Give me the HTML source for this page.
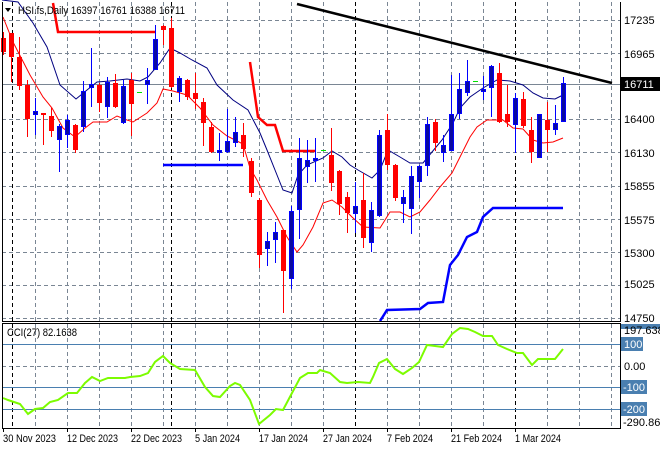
<!DOCTYPE html>
<html><head><meta charset="utf-8"><style>
html,body{margin:0;padding:0;background:#fff;}
svg{display:block;font-family:"Liberation Sans",sans-serif;font-size:11px;}
</style></head><body>
<svg width="660" height="450" viewBox="0 0 660 450" xmlns="http://www.w3.org/2000/svg">
<rect width="660" height="450" fill="#fff"/>
<g stroke="#7a8694" stroke-width="1" stroke-dasharray="4,3" fill="none">
<path d="M2 20.5H620M2 53.5H620M2 119.5H620M2 152.5H620M2 186.5H620M2 219.5H620M2 252.5H620M2 285.5H620M2 318.5H620"/>
<path d="M35.5 2V321M67.5 2V321M99.5 2V321M131.5 2V321M163.5 2V321M195.5 2V321M227.5 2V321M259.5 2V321M291.5 2V321M323.5 2V321M387.5 2V321M419.5 2V321M451.5 2V321M483.5 2V321M547.5 2V321M579.5 2V321M611.5 2V321"/>
<path d="M35.5 324V428M67.5 324V428M99.5 324V428M131.5 324V428M163.5 324V428M195.5 324V428M227.5 324V428M259.5 324V428M291.5 324V428M323.5 324V428M387.5 324V428M419.5 324V428M451.5 324V428M483.5 324V428M547.5 324V428M579.5 324V428M611.5 324V428"/>
<path d="M2 366.5H620"/>
</g>
<g stroke="#000" stroke-width="1" stroke-dasharray="4,3">
<path d="M12.5 2V321M171.5 2V321M355.5 2V321M515.5 2V321M12.5 324V428M171.5 324V428M355.5 324V428M515.5 324V428"/>
</g>
<path d="M2 84.5H620" stroke="#7a8694" stroke-width="1"/>
<polyline points="53,3 58,32 155,32" fill="none" stroke="#f00" stroke-width="2.5"/>
<polyline points="250,62 258,117 267,125 275,125 283,151 315,151" fill="none" stroke="#f00" stroke-width="2.5"/>
<path d="M163 165H243" stroke="#0000ff" stroke-width="2.5"/>
<polyline points="380,321 382,318 387,310 420,309 428,303 443,302 450,265 458,255 467,237 477,232 483,217 493,208 563,208" fill="none" stroke="#0000ff" stroke-width="2.5"/>
<polyline points="2,0 18,2 33,23 47,47 60,85 76,99 87,90 97,82 110,81 127,79 140,81 148,77 160,63 170,48 180,53 192,60 207,68 217,85 233,100 248,110 260,133 267,150 275,170 283,190 292,193 298,175 307,165 323,158 332,151 342,157 350,165 358,170 372,178 380,170 388,150 400,157 410,163 423,163 432,152 442,140 453,123 460,108 470,97 483,88 497,80 510,81 523,85 533,93 543,98 555,99 563,95" fill="none" stroke="#000080" stroke-width="1"/>
<polyline points="3,17 13,42 30,75 43,97 52,108 63,128 75,137 85,128 93,122 107,122 117,116 127,120 133,122 147,113 157,103 163,89 173,91 187,95 200,108 213,125 227,136 243,144 250,168 257,180 267,200 277,217 287,237 297,252 303,245 313,227 323,203 332,200 342,207 352,217 363,227 380,228 390,212 400,212 410,217 420,212 430,200 440,187 452,173 460,157 470,137 477,127 487,120 503,120 513,128 523,129 533,140 543,143 553,142 563,138" fill="none" stroke="#f00" stroke-width="1"/>
<path d="M297 4L612 83" stroke="#000" stroke-width="2.5"/>
<g stroke="#f00" fill="#f00" stroke-width="1">
<path d="M3.5 32V55M11.5 33V82M19.5 37V90M27.5 80V137M43.5 113V145M51.5 108V137M75.5 124V153M99.5 83V112M115.5 74V108M131.5 73V136M163.5 25V45M171.5 18V88M187.5 79V100M195.5 73V109M203.5 98V146M211.5 122V153M243.5 123V157M251.5 158V197M259.5 198V268M283.5 230V313M331.5 128V191M339.5 170V215M347.5 192V233M363.5 173V248M387.5 114V170M395.5 164V201M435.5 119V151M499.5 63V123M507.5 85V127M523.5 92V128M531.5 117V163M547.5 102V152"/>
<g stroke="none">
<rect x="1" y="38" width="5" height="14"/><rect x="9" y="33" width="5" height="24"/><rect x="17" y="57" width="5" height="29"/><rect x="25" y="85" width="5" height="34"/><rect x="41" y="113" width="5" height="2"/><rect x="49" y="116" width="5" height="15"/><rect x="73" y="125" width="5" height="25"/><rect x="97" y="85" width="5" height="18"/><rect x="113" y="83" width="5" height="24"/><rect x="129" y="80" width="5" height="24"/><rect x="161" y="26" width="5" height="4"/><rect x="169" y="28" width="5" height="59"/><rect x="185" y="80" width="5" height="17"/><rect x="193" y="93" width="5" height="6"/><rect x="201" y="102" width="5" height="21"/><rect x="209" y="127" width="5" height="25"/><rect x="241" y="135" width="5" height="14"/><rect x="249" y="161" width="5" height="32"/><rect x="257" y="200" width="5" height="55"/><rect x="281" y="230" width="5" height="41"/><rect x="329" y="155" width="5" height="28"/><rect x="337" y="171" width="5" height="33"/><rect x="345" y="197" width="5" height="16"/><rect x="361" y="200" width="5" height="38"/><rect x="385" y="130" width="5" height="35"/><rect x="393" y="165" width="5" height="33"/><rect x="433" y="122" width="5" height="21"/><rect x="497" y="73" width="5" height="49"/><rect x="505" y="114" width="5" height="8"/><rect x="521" y="99" width="5" height="27"/><rect x="529" y="130" width="5" height="22"/><rect x="545" y="120" width="5" height="10"/>
</g></g>
<g stroke="#0000ff" stroke-width="1">
<path d="M35.5 98V135M59.5 124V172M67.5 115V148M83.5 81V132M91.5 48V107M107.5 77V118M123.5 80V124M147.5 68V104M155.5 25V70M179.5 76V102M219.5 133V161M227.5 109V153M235.5 117V147M267.5 232V266M275.5 222V263M291.5 206V289M299.5 138V239M307.5 140V183M315.5 138V182M355.5 182V233M371.5 202V252M379.5 130V217M403.5 190V223M411.5 166V234M419.5 165V198M427.5 117V176M443.5 135V162M451.5 75V151M459.5 73V119M467.5 60V96M483.5 76V100M491.5 65V117M515.5 93V153M539.5 114V157M555.5 105V135M563.5 77V121"/>
</g>
<g fill="#0a0aa0" stroke="#0000ff" stroke-width="1">
<rect x="33.5" y="111.5" width="4" height="3"/><rect x="57.5" y="126.5" width="4" height="13"/><rect x="65.5" y="120.5" width="4" height="14"/><rect x="81.5" y="91.5" width="4" height="35"/><rect x="89.5" y="84.5" width="4" height="3"/><rect x="105.5" y="82.5" width="4" height="24"/><rect x="121.5" y="86.5" width="4" height="36"/><rect x="145.5" y="80.5" width="4" height="4"/><rect x="153.5" y="39.5" width="4" height="30"/><rect x="177.5" y="78.5" width="4" height="13"/><rect x="217.5" y="150.5" width="4" height="2"/><rect x="225.5" y="141.5" width="4" height="10"/><rect x="233.5" y="132.5" width="4" height="10"/><rect x="265.5" y="241.5" width="4" height="7"/><rect x="273.5" y="232.5" width="4" height="7"/><rect x="289.5" y="211.5" width="4" height="67"/><rect x="297.5" y="158.5" width="4" height="51"/><rect x="305.5" y="160.5" width="4" height="6"/><rect x="313.5" y="158.5" width="4" height="2"/><rect x="353.5" y="206.5" width="4" height="7"/><rect x="369.5" y="210.5" width="4" height="32"/><rect x="377.5" y="135.5" width="4" height="80"/><rect x="401.5" y="197.5" width="4" height="6"/><rect x="409.5" y="176.5" width="4" height="32"/><rect x="417.5" y="166.5" width="4" height="15"/><rect x="425.5" y="124.5" width="4" height="41"/><rect x="441.5" y="145.5" width="4" height="7"/><rect x="449.5" y="114.5" width="4" height="36"/><rect x="457.5" y="89.5" width="4" height="24"/><rect x="465.5" y="81.5" width="4" height="11"/><rect x="481.5" y="89.5" width="4" height="2"/><rect x="489.5" y="66.5" width="4" height="21"/><rect x="513.5" y="98.5" width="4" height="26"/><rect x="537.5" y="114.5" width="4" height="43"/><rect x="553.5" y="123.5" width="4" height="6"/><rect x="561.5" y="83.5" width="4" height="38"/>
</g>
<path d="M137 92.5H142M321 150.5H326M473 81.5H478" stroke="#00e000" stroke-width="1"/>
<path d="M2 344.5H620M2 387.5H620M2 409.5H620" stroke="#4a7fb0" stroke-width="1"/>
<polyline points="3,398 8,400 20,404 28,414 35,409 43,408 50,402 58,400 68,393 77,393 85,383 92,377 100,381 108,378 125,378 130,377 140,376 148,373 155,362 163,356 170,363 180,369 195,370 205,387 213,396 220,397 230,386 235,383 240,385 250,400 259,424 270,415 276,409 283,410 292,393 300,378 308,373 317,373 320,370 330,373 340,382 347,383 358,382 370,383 373,377 379,363 387,359 395,369 403,374 412,368 419,362 427,345 435,346 443,347 452,334 460,328 468,329 475,332 483,336 492,336 498,345 507,349 517,353 523,353 532,365 538,359 555,359 563,349" fill="none" stroke="#7cfc00" stroke-width="2"/>
<g fill="none" stroke="#000" stroke-width="1">
<path d="M2.5 2V321.5H620.5V2"/>
<path d="M2.5 323.5H620.5V428.5H2.5Z"/>
</g>
<path d="M5 8L11 8L8 12Z" fill="#000"/>
<text x="18" y="14" fill="#000" textLength="167" lengthAdjust="spacingAndGlyphs">HSI.fs,Daily  16397 16761 16388 16711</text>
<text x="7" y="336" fill="#000" textLength="70" lengthAdjust="spacingAndGlyphs">CCI(27) 82.1638</text>
<g fill="#000">
<text x="624" y="24">17235</text>
<text x="624" y="58">16965</text>
<text x="624" y="123">16400</text>
<text x="624" y="157">16130</text>
<text x="624" y="190">15855</text>
<text x="624" y="224">15575</text>
<text x="624" y="257">15300</text>
<text x="624" y="288">15025</text>
<text x="624" y="322">14750</text>
</g>
<rect x="621" y="77" width="39" height="14" fill="#000"/>
<text x="624" y="88" fill="#fff">16711</text>
<rect x="621" y="324" width="39" height="5" fill="#4a7fb0"/>
<text x="624" y="334" fill="#000">197.6389</text>
<rect x="621" y="337" width="22" height="14" fill="#4a7fb0"/>
<text x="624" y="348" fill="#fff">100</text>
<text x="624" y="370" fill="#000">0.00</text>
<rect x="621" y="380" width="26" height="14" fill="#4a7fb0"/>
<text x="623" y="391" fill="#fff">-100</text>
<rect x="621" y="402" width="26" height="14" fill="#4a7fb0"/>
<text x="623" y="413" fill="#fff">-200</text>
<text x="623" y="426" fill="#000">-290.864</text>
<g fill="#000" lengthAdjust="spacingAndGlyphs">
<text x="3" y="442" textLength="53" lengthAdjust="spacingAndGlyphs">30 Nov 2023</text>
<text x="67" y="442" textLength="51" lengthAdjust="spacingAndGlyphs">12 Dec 2023</text>
<text x="131" y="442" textLength="51" lengthAdjust="spacingAndGlyphs">22 Dec 2023</text>
<text x="195" y="442" textLength="45" lengthAdjust="spacingAndGlyphs">5 Jan 2024</text>
<text x="259" y="442" textLength="49" lengthAdjust="spacingAndGlyphs">17 Jan 2024</text>
<text x="323" y="442" textLength="49" lengthAdjust="spacingAndGlyphs">27 Jan 2024</text>
<text x="387" y="442" textLength="46" lengthAdjust="spacingAndGlyphs">7 Feb 2024</text>
<text x="451" y="442" textLength="51" lengthAdjust="spacingAndGlyphs">21 Feb 2024</text>
<text x="515" y="442" textLength="46" lengthAdjust="spacingAndGlyphs">1 Mar 2024</text>
</g>
<path d="M3.5 428V432M67.5 428V432M131.5 428V432M195.5 428V432M259.5 428V432M323.5 428V432M387.5 428V432M451.5 428V432M515.5 428V432" stroke="#000"/>
</svg>
</body></html>
